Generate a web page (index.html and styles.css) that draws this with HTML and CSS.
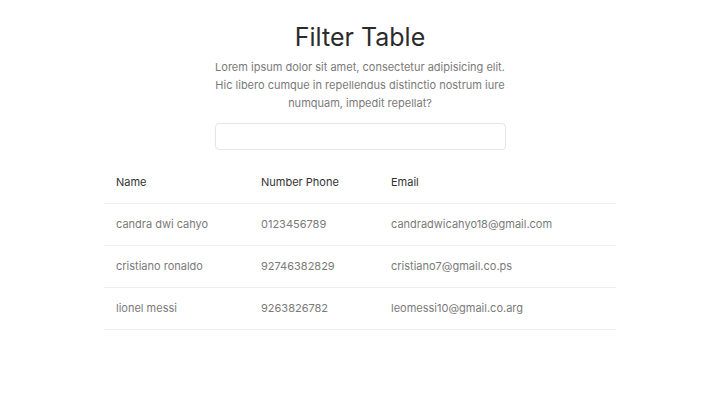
FILE: index.html
```html
<!DOCTYPE html>
<html>
<head>
<meta charset="utf-8">
<link rel="stylesheet" href="styles.css">
</head>
<body>
<main class="page">
  <h1 class="title">Filter Table</h1>
  <p class="lead">Lorem ipsum dolor sit amet, consectetur adipisicing elit. Hic libero cumque in repellendus distinctio nostrum iure numquam, impedit repellat?</p>
  <input class="search" type="text">
  <table class="data">
    <thead>
      <tr><th class="c1">Name</th><th class="c2">Number Phone</th><th>Email</th></tr>
    </thead>
    <tbody>
      <tr><td>candra dwi cahyo</td><td>0123456789</td><td>candradwicahyo18@gmail.com</td></tr>
      <tr><td>cristiano ronaldo</td><td>92746382829</td><td>cristiano7@gmail.co.ps</td></tr>
      <tr><td>lionel messi</td><td>9263826782</td><td>leomessi10@gmail.co.arg</td></tr>
    </tbody>
  </table>
</main>
</body>
</html>
```
FILE: styles.css
```css
* { box-sizing: border-box; }
html, body { margin: 0; background: #fff; }
body { font-family: Inter, "Noto Sans", sans-serif; color: #333; }
.page {
  display: flex;
  flex-direction: column;
  align-items: center;
  padding-top: 19px;
}
.title {
  margin: 0;
  font-size: 25px;
  font-weight: 400;
  line-height: 36px;
  color: #2b2b2b;
}
.lead {
  margin: 3px 0 0;
  width: 300px;
  text-align: center;
  font-size: 11px;
  line-height: 18px;
  color: #7a7a7a;
}
.search {
  margin-top: 11px;
  width: 291px;
  height: 27px;
  border: 1px solid #e6e6e6;
  border-radius: 4px;
  outline: none;
}
.data {
  margin-top: 11px;
  width: 512px;
  border-collapse: collapse;
  font-size: 11px;
}
.data th, .data td {
  text-align: left;
  padding: 0 12px;
  height: 42px;
  border-bottom: 1px solid #efefef;
}
.data th { font-weight: 400; color: #333; }
.data td { color: #7a7a7a; }
.c1 { width: 145px; }
.c2 { width: 130px; }
```
